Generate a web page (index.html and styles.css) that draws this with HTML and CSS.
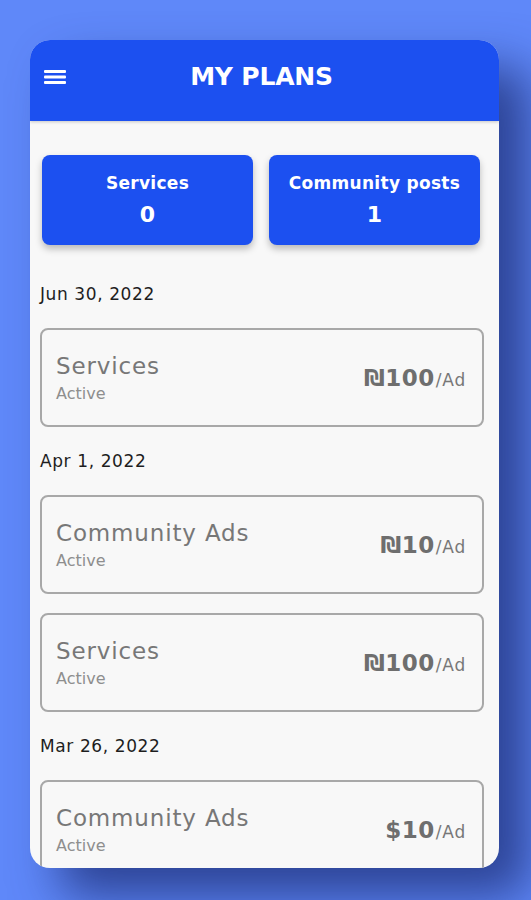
FILE: index.html
```html
<!DOCTYPE html>
<html lang="en">
<head>
<meta charset="utf-8">
<title>My Plans</title>
<link rel="stylesheet" href="styles.css">
</head>
<body>
<div class="phone">
  <header class="topbar">
    <button class="menu" aria-label="Menu">
      <svg width="22" height="14" viewBox="0 0 22 14"><rect x="0" y="0" width="22" height="3" rx="1" fill="#fff"/><rect x="0" y="5.5" width="22" height="3" rx="1" fill="#fff"/><rect x="0" y="11" width="22" height="3" rx="1" fill="#fff"/></svg>
    </button>
    <h1 class="title">MY PLANS</h1>
  </header>
  <main class="content">
    <section class="stats">
      <div class="stat"><div class="stat-label">Services</div><div class="stat-value">0</div></div>
      <div class="stat"><div class="stat-label">Community posts</div><div class="stat-value">1</div></div>
    </section>
    <section class="group">
      <div class="date">Jun 30, 2022</div>
      <div class="plan">
        <div class="plan-info"><div class="plan-name">Services</div><div class="plan-status">Active</div></div>
        <div class="plan-price"><span class="amount">₪100</span><span class="unit">/Ad</span></div>
      </div>
    </section>
    <section class="group">
      <div class="date">Apr 1, 2022</div>
      <div class="plan">
        <div class="plan-info"><div class="plan-name">Community Ads</div><div class="plan-status">Active</div></div>
        <div class="plan-price"><span class="amount">₪10</span><span class="unit">/Ad</span></div>
      </div>
      <div class="plan">
        <div class="plan-info"><div class="plan-name">Services</div><div class="plan-status">Active</div></div>
        <div class="plan-price"><span class="amount">₪100</span><span class="unit">/Ad</span></div>
      </div>
    </section>
    <section class="group">
      <div class="date">Mar 26, 2022</div>
      <div class="plan">
        <div class="plan-info"><div class="plan-name">Community Ads</div><div class="plan-status">Active</div></div>
        <div class="plan-price"><span class="amount">$10</span><span class="unit">/Ad</span></div>
      </div>
    </section>
  </main>
</div>
</body>
</html>
```
FILE: styles.css
```css
* { box-sizing: border-box; }
html, body { margin: 0; padding: 0; }
body {
  width: 531px;
  height: 900px;
  overflow: hidden;
  background: #5f88f9;
  font-family: "DejaVu Sans", "Open Sans", sans-serif;
  padding: 40px 32px 0 30px;
}
.phone {
  width: 469px;
  height: 828px;
  border-radius: 20px;
  overflow: hidden;
  background: #f8f8f8;
  box-shadow: 30px 28px 48px rgba(25, 40, 110, 0.72);
  display: flex;
  flex-direction: column;
}
.topbar {
  height: 81px;
  flex: none;
  background: #1c50f0;
  display: flex;
  align-items: center;
  position: relative;
  box-shadow: 0 1px 3px rgba(0,0,0,0.2);
  z-index: 1;
}
.menu {
  position: absolute;
  left: 14px;
  top: 30px;
  width: 22px;
  height: 14px;
  padding: 0;
  border: 0;
  background: none;
  display: block;
}
.menu svg { display: block; }
.title {
  margin: 0;
  width: 100%;
  text-align: center;
  color: #fff;
  font-size: 25px;
  font-weight: 700;
  line-height: 30px;
  letter-spacing: -0.2px;
  padding-right: 6px;
  padding-bottom: 7px;
}
.content {
  flex: 1;
  padding: 34px 15px 0 10px;
}
.stats {
  display: grid;
  grid-template-columns: 211px 211px;
  gap: 16px;
  margin: 0 4px 37px 2px;
}
.stat {
  height: 90px;
  background: #1c50f0;
  border-radius: 8px;
  box-shadow: 0 4px 7px rgba(0,0,0,0.25);
  color: #fff;
  display: flex;
  flex-direction: column;
  align-items: center;
  padding-top: 16px;
}
.stat-label {
  font-size: 17px;
  font-weight: 700;
  line-height: 24px;
  letter-spacing: 0.3px;
}
.stat-value {
  font-size: 22px;
  font-weight: 700;
  line-height: 28px;
  margin-top: 6px;
}
.group {
  display: flex;
  flex-direction: column;
  gap: 19px;
  margin-bottom: 22px;
}
.date {
  font-size: 17px;
  line-height: 24px;
  color: #1e1e1e;
  letter-spacing: 0.6px;
  margin-bottom: 3px;
}
.plan {
  height: 99px;
  border: 2px solid #a8a8a8;
  border-radius: 8px;
  display: flex;
  align-items: center;
  justify-content: space-between;
  padding: 0 16px 0 14px;
}
.plan-name {
  font-size: 23px;
  line-height: 30px;
  letter-spacing: 0.85px;
  color: #777;
}
.plan-status {
  font-size: 16px;
  line-height: 22px;
  margin-top: 2px;
  color: #8e8e8e;
}
.plan-price {
  color: #6e6e6e;
  display: flex;
  align-items: baseline;
}
.amount {
  font-size: 23px;
  font-weight: 700;
  letter-spacing: 0.5px;
}
.unit {
  font-size: 17px;
  letter-spacing: 0.8px;
  color: #777;
  margin-left: 1px;
}
```
